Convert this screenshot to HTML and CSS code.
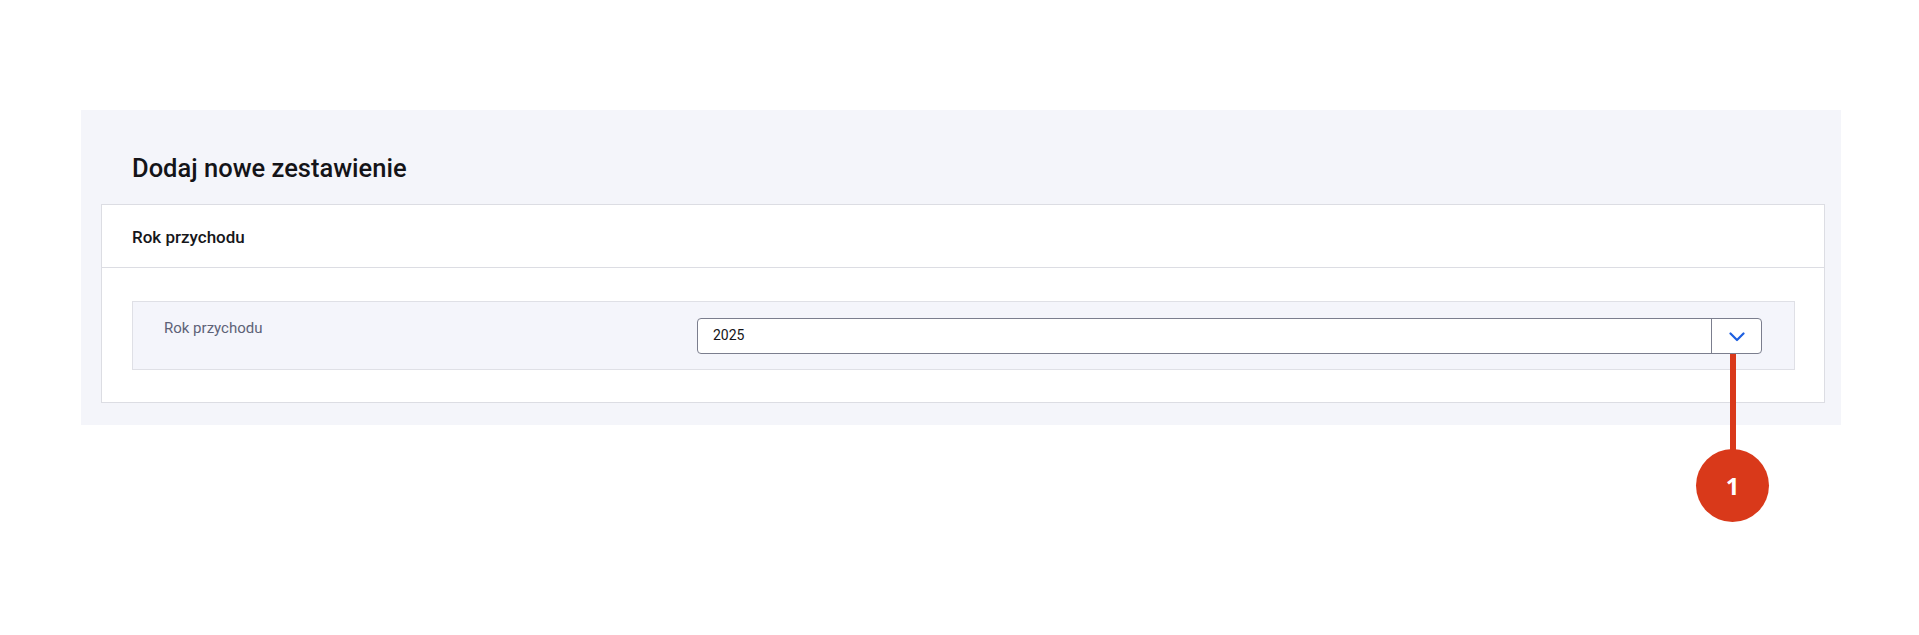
FILE: index.html
```html
<!DOCTYPE html>
<html lang="pl">
<head>
<meta charset="utf-8">
<title>Dodaj nowe zestawienie</title>
<link rel="stylesheet" href="styles.css">
</head>
<body>
<main class="page">
  <section class="panel">
    <h1 class="title">Dodaj nowe zestawienie</h1>
    <div class="card">
      <div class="card-header">Rok przychodu</div>
      <div class="card-body">
        <div class="field">
          <label class="field-label">Rok przychodu</label>
          <div class="select">
            <span class="select-value">2025</span>
            <span class="select-btn">
              <svg class="chevron" width="16" height="10" viewBox="0 0 16 10" aria-hidden="true">
                <path d="M1.5 1.5 L8 8 L14.5 1.5" fill="none" stroke="#1d5fe0" stroke-width="2.2" stroke-linecap="round" stroke-linejoin="round"/>
              </svg>
              <span class="marker-line"></span>
              <span class="marker">1</span>
            </span>
          </div>
        </div>
      </div>
    </div>
  </section>
</main>
</body>
</html>
```

FILE: styles.css
```css
* { box-sizing: border-box; }

html, body {
  margin: 0;
  padding: 0;
  background: #ffffff;
}

body {
  font-family: Roboto, "Noto Sans", "Liberation Sans", sans-serif;
  color: #1b1b1f;
}

.page {
  min-height: 635px;
  padding: 110px 0 0 81px;
}

.panel {
  width: 1760px;
  background: #f4f5fa;
  padding: 42px 16px 22px 20px;
}

.title {
  margin: 0 0 20px 31px;
  font-size: 25.5px;
  line-height: 32px;
  font-weight: 500;
  color: #141418;
}

.card {
  background: #ffffff;
  border: 1px solid #dcdde3;
}

.card-header {
  padding: 20px 30px 18px;
  font-size: 17px;
  line-height: 24px;
  font-weight: 500;
  color: #16161a;
  border-bottom: 1px solid #dcdde3;
}

.card-body {
  padding: 33px 29px 32px 30px;
}

.field {
  display: grid;
  grid-template-columns: 533px 1fr;
  align-items: start;
  padding: 16px 32px 15px 31px;
  background: #f4f5fb;
  border: 1px solid #dfe0e6;
}

.field-label {
  font-size: 15px;
  line-height: 20px;
  color: #5d6277;
}

.select {
  display: flex;
  align-items: stretch;
  height: 36px;
  background: #ffffff;
  border: 1px solid #7b7e8e;
  border-radius: 4px;
}

.select-value {
  flex: 1;
  display: flex;
  align-items: center;
  padding: 0 0 2px 15px;
  font-size: 14px;
  color: #141418;
}

.select-btn {
  position: relative;
  width: 50px;
  display: flex;
  align-items: center;
  justify-content: center;
  border-left: 1px solid #7b7e8e;
  padding-top: 1px;
}

.chevron {
  display: block;
}

.marker-line {
  position: absolute;
  left: 18px;
  top: calc(100% + 1px);
  width: 6px;
  height: 110px;
  background: #d9391a;
}

.marker {
  position: absolute;
  left: -16px;
  top: 130px;
  width: 73px;
  height: 73px;
  border-radius: 50%;
  background: #d9391a;
  color: #ffffff;
  display: flex;
  align-items: center;
  justify-content: center;
  font-family: "Open Sans", "Noto Sans", sans-serif;
  font-weight: 700;
  font-size: 24px;
  line-height: 1;
}
```
